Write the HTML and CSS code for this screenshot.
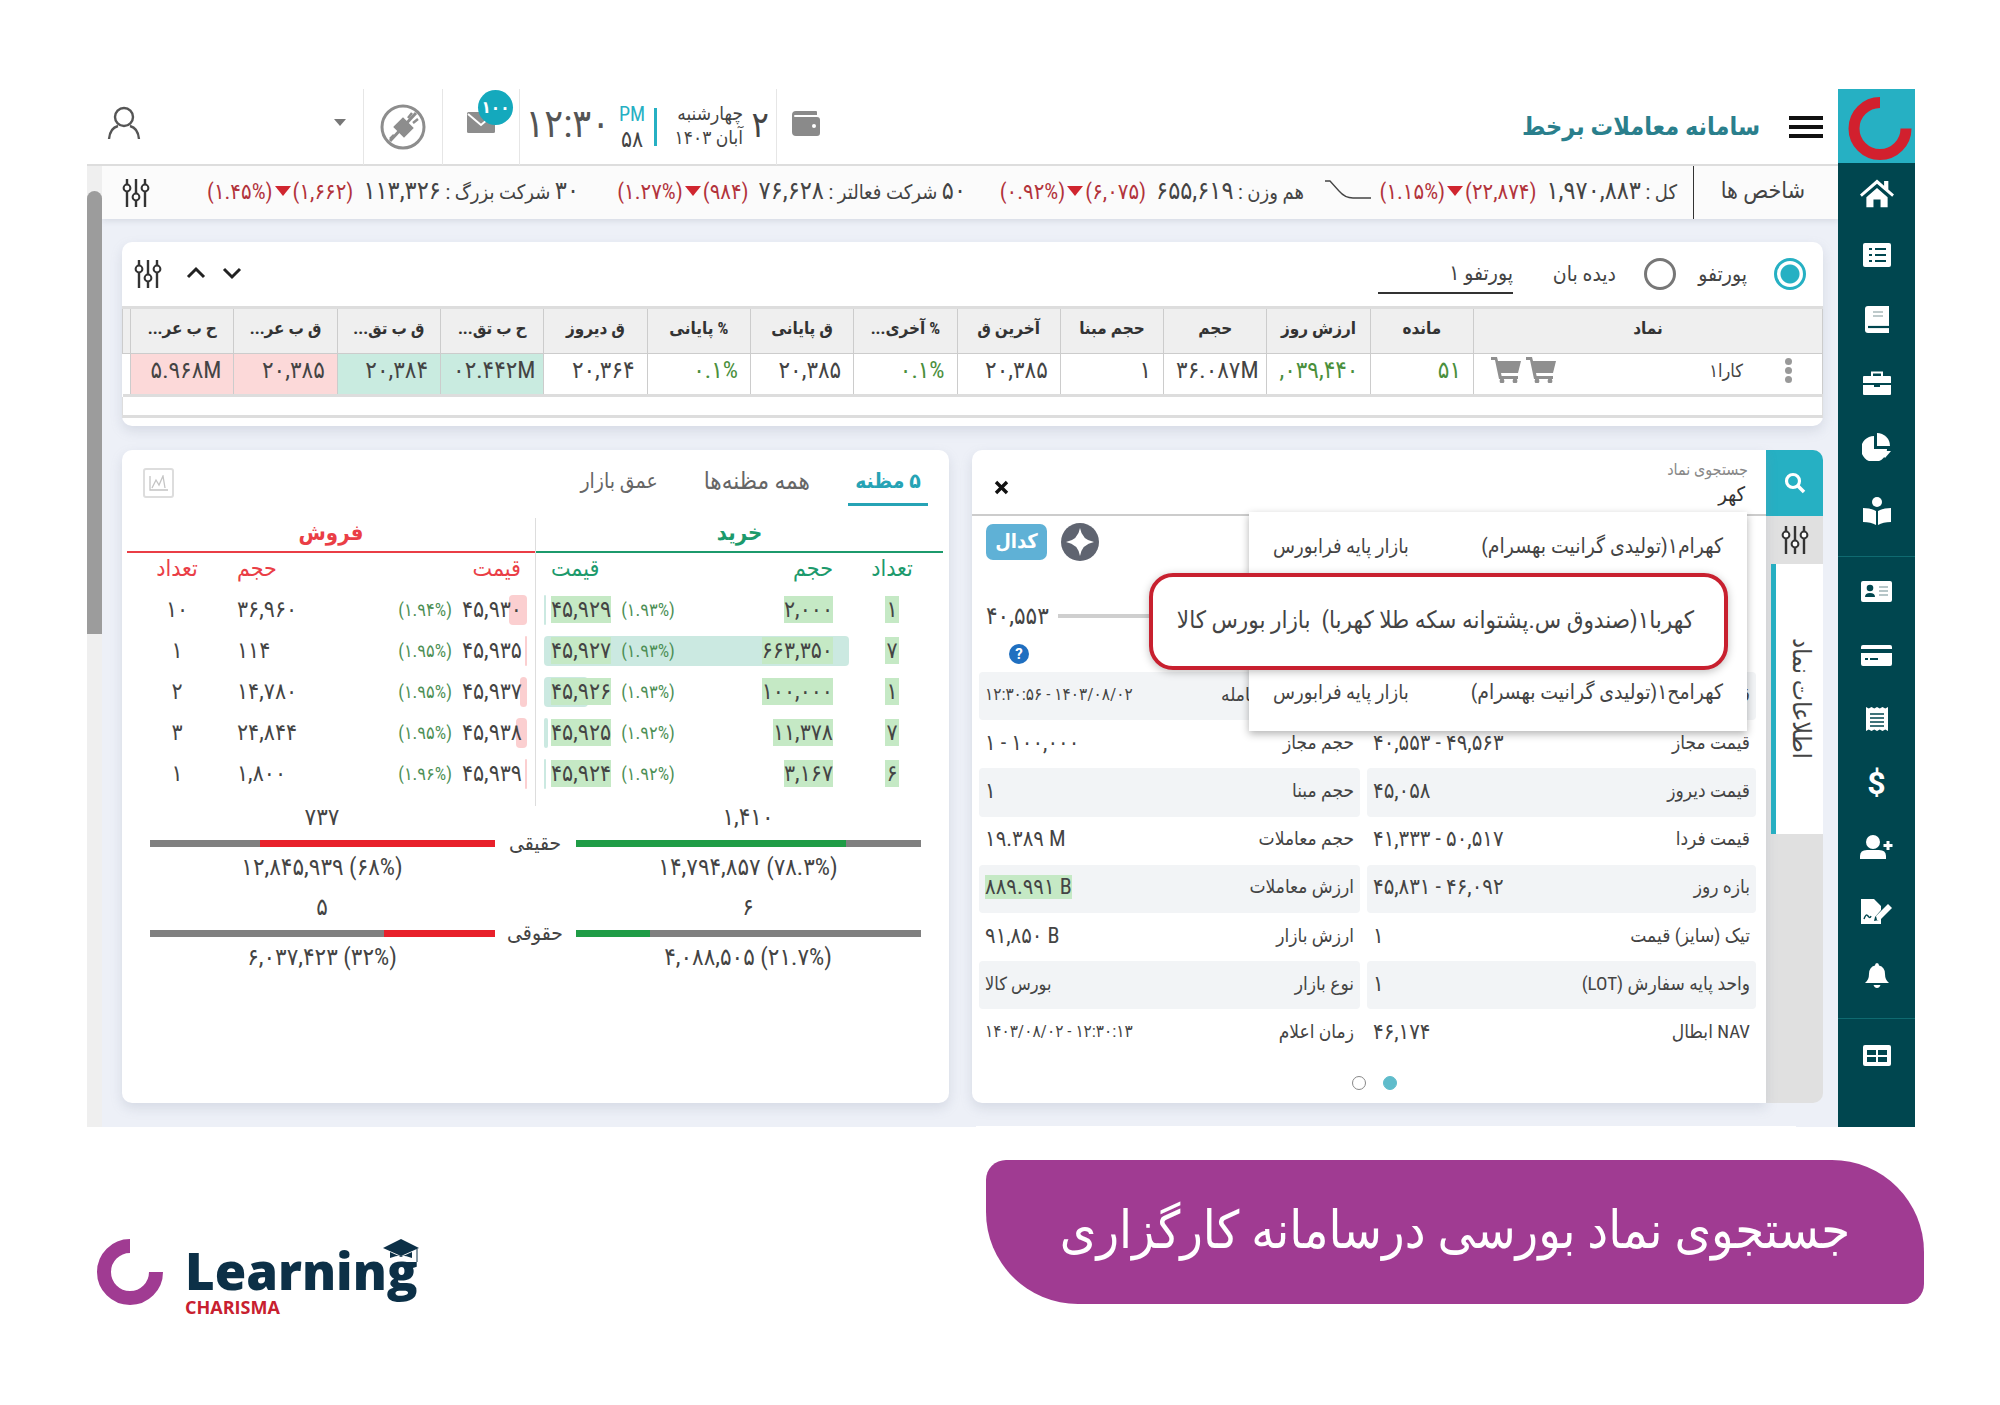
FILE: index.html
```html
<!DOCTYPE html>
<html lang="fa" dir="rtl">
<head>
    <meta charset="utf-8">
    <title>سامانه معاملات برخط</title>
    <link rel="stylesheet" href="styles.css">
</head>
<body>
    <svg class="defs" width="0" height="0">
        <symbol id="i-sliders" viewBox="0 0 30 30">
            <path d="M6 1v28M15 1v28M24 1v28" stroke="#333" stroke-width="2.4" fill="none"/>
            <circle cx="6" cy="10" r="3.4" fill="#fff" stroke="#333" stroke-width="2"/>
            <circle cx="15" cy="19" r="3.4" fill="#fff" stroke="#333" stroke-width="2"/>
            <circle cx="24" cy="10" r="3.4" fill="#fff" stroke="#333" stroke-width="2"/>
        </symbol>
        <symbol id="i-cart" viewBox="0 0 30 26">
            <path d="M0 0h6l1 4h23l-3 12H10l.6 3H27v3H8L4 3H0z" fill="#8f8f8f"/>
            <circle cx="11" cy="24" r="2.4" fill="#8f8f8f"/>
            <circle cx="24" cy="24" r="2.4" fill="#8f8f8f"/>
        </symbol>
    </svg>

    <div class="app">
        <aside class="side">
            <div class="side-logo">
                <svg width="77" height="74" viewBox="0 0 77 74"><path d="M42 13.5A26 26 0 1 0 68 39.5" fill="none" stroke="#d2202e" stroke-width="11"/></svg>
            </div>
            <div class="side-group">
                <span class="side-item"><svg width="34" height="30" viewBox="0 0 24 21"><path d="M12 1 0 11.5l1.3 1.6L12 3.9l10.7 9.2 1.3-1.6-4-3.5V2h-3v3.4z M4.500 13.500 12 7l7.500 6.500V20.500h-5v-5.500h-5v5.500h-5z" fill="#fff"/></svg></span>
                <span class="side-item"><svg width="28" height="24" viewBox="0 0 28 24"><rect width="28" height="24" rx="2" fill="#fff"/><path d="M6 6h3M12 6h11M6 12h3M12 12h11M6 18h3M12 18h11" stroke="#00464f" stroke-width="2.200"/></svg></span>
                <span class="side-item"><svg width="24" height="27" viewBox="0 0 24 27"><path d="M3 0h21v27H3a3 3 0 0 1-3-3V3a3 3 0 0 1 3-3z" fill="#fff"/><path d="M8 6h10M8 10h10" stroke="#a9b9bb" stroke-width="1.600"/><path d="M3 21h21" stroke="#00464f" stroke-width="2.200"/></svg></span>
                <span class="side-item"><svg width="28" height="24" viewBox="0 0 28 24"><path d="M9 5V1.500h10V5" fill="none" stroke="#fff" stroke-width="2"/><path d="M1 5h26a1 1 0 0 1 1 1v6H0V6a1 1 0 0 1 1-1zM0 14h11v2h6v-2h11v9a1 1 0 0 1-1 1H1a1 1 0 0 1-1-1z" fill="#fff"/></svg></span>
                <span class="side-item"><svg width="30" height="28" viewBox="0 0 30 28"><path d="M12 3v13h13A13 13 0 1 1 12 3z" fill="#fff"/><path d="M15 0a13 13 0 0 1 13 13H15z" fill="#fff"/><path d="M17 18h12l-6 7z" fill="#fff"/></svg></span>
                <span class="side-item"><svg width="28" height="28" viewBox="0 0 28 28"><circle cx="14" cy="5" r="5" fill="#fff"/><path d="M0 11q8 0 13 3v14q-5-3-13-3zM28 11q-8 0-13 3v14q5-3 13-3z" fill="#fff"/></svg></span>
            </div>
            <div class="side-group">
                <span class="side-item"><svg width="31" height="21" viewBox="0 0 31 21"><rect width="31" height="21" rx="2" fill="#fff"/><circle cx="9" cy="7" r="3.300" fill="#00464f"/><path d="M4 16q0-4 5-4t5 4z" fill="#00464f"/><path d="M18 6h9M18 10h9M18 14h9" stroke="#9fb4b7" stroke-width="1.600"/></svg></span>
                <span class="side-item"><svg width="31" height="21" viewBox="0 0 31 21"><path d="M2 0h27a2 2 0 0 1 2 2v2H0V2a2 2 0 0 1 2-2zM0 8h31v11a2 2 0 0 1-2 2H2a2 2 0 0 1-2-2z" fill="#fff"/><path d="M4 14h3M9 14h8" stroke="#00464f" stroke-width="2"/></svg></span>
                <span class="side-item"><svg width="22" height="24" viewBox="0 0 22 24"><path d="M0 0l2.750 1.500L5.500 0l2.750 1.500L11 0l2.750 1.500L16.500 0l2.750 1.500L22 0v24l-2.750-1.500L16.500 24l-2.750-1.500L11 24l-2.750-1.500L5.500 24l-2.750-1.500L0 24z" fill="#fff"/><path d="M4 7h14M4 11h14M4 15h14M4 19h14" stroke="#00464f" stroke-width="1.700"/></svg></span>
                <span class="side-item side-dollar">$</span>
                <span class="side-item"><svg width="34" height="24" viewBox="0 0 34 24"><circle cx="13" cy="7" r="7" fill="#fff"/><path d="M0 24v-3q0-6 7-6h12q7 0 7 6v3z" fill="#fff"/><path d="M28 6v9M23.500 10.500h9" stroke="#fff" stroke-width="3"/></svg></span>
                <span class="side-item"><svg width="31" height="25" viewBox="0 0 31 25"><path d="M0 0h13l7 7v4l-6 7-1 4 5-1 2-2v6H0z" fill="#fff"/><path d="M3 20q2-6 4-3t3 0" fill="none" stroke="#00464f" stroke-width="1.400"/><path d="M16 21l-1-4L27 5l4 4-12 12z" fill="#fff"/></svg></span>
                <span class="side-item"><svg width="24" height="25" viewBox="0 0 24 25"><path d="M12 0q2 0 2 2.500Q20 4 20 11q0 6 4 9H0q4-3 4-9 0-7 6-8.500Q10 0 12 0z" fill="#fff"/><path d="M8.500 22h7q-1 3-3.500 3T8.500 22z" fill="#fff"/></svg></span>
            </div>
            <div class="side-group side-last">
                <span class="side-item"><svg width="28" height="21" viewBox="0 0 28 21"><rect width="28" height="21" rx="2" fill="#fff"/><path d="M4 5h9v5H4zM15 5h9v5h-9zM4 12h9v5H4zM15 12h9v5h-9z" fill="#00464f"/></svg></span>
            </div>
        </aside>

        <div class="main">
            <header class="topbar">
                <span class="burger"><i></i><i></i><i></i></span>
                <h1 class="brand">سامانه معاملات برخط</h1>
                <span class="top-fill"></span>
                <span class="wallet"><svg width="28" height="25" viewBox="0 0 28 25"><path d="M4 0h20a1 1 0 0 1 1 1v3H3a1 1 0 0 0 0 2h22a3 3 0 0 1 3 3v13a3 3 0 0 1-3 3H4a4 4 0 0 1-4-4V4a4 4 0 0 1 4-4z" fill="#8a8a8a"/><circle cx="22" cy="15" r="2" fill="#fff"/></svg></span>
                <div class="top-cell clock-cell">
                    <span class="day">۲</span>
                    <span class="date"><b>چهارشنبه</b><b>آبان ۱۴۰۳</b></span>
                    <span class="vline"></span>
                    <span class="ampm"><em>PM</em><b>۵۸</b></span>
                    <span class="clock">۱۲:۳۰</span>
                </div>
                <div class="top-cell mail-cell">
                    <span class="badge">۱۰۰</span>
                    <svg width="28" height="21" viewBox="0 0 28 21"><rect width="28" height="21" rx="1.500" fill="#8d8d8d"/><path d="M1 2l13 11L27 2" fill="none" stroke="#fff" stroke-width="2"/></svg>
                </div>
                <div class="top-cell plug-cell">
                    <svg width="46" height="46" viewBox="0 0 46 46"><circle cx="23" cy="23" r="21" fill="none" stroke="#8d8d8d" stroke-width="3"/><path d="M10 37 36 9" stroke="#8d8d8d" stroke-width="3"/><path d="M15 23l8-8 9 9-8 8zM28 14l4-5M33 19l5-4M14 31l-4 4" fill="#8d8d8d" stroke="#8d8d8d" stroke-width="2.500"/></svg>
                </div>
                <div class="user-cell">
                    <span class="caret"></span>
                    <svg width="34" height="34" viewBox="0 0 34 34"><circle cx="17" cy="11" r="9" fill="none" stroke="#555" stroke-width="2.400"/><path d="M2 33q1-11 9-13M32 33q-1-11-9-13" fill="none" stroke="#555" stroke-width="2.400"/></svg>
                </div>
            </header>

            <div class="body">
                <div class="content">
                    <div class="ticker">
                        <span class="tick-head">شاخص ها</span>
                        <span class="tick tick-a">کل : <b>۱,۹۷۰,۸۸۳</b><i>(۱.۱۵%)<u></u>(۲۲,۸۷۴)</i></span>
                        <svg class="spark" width="46" height="22" viewBox="0 0 46 22"><path d="M0 2h5l9 10q6 7 14 7h18" fill="none" stroke="#444" stroke-width="1.300"/></svg>
                        <span class="tick tick-b">هم وزن : <b>۶۵۵,۶۱۹</b><i>(۰.۹۲%)<u></u>(۶,۰۷۵)</i></span>
                        <span class="tick tick-c"><b>۵۰</b> شرکت فعالتر : <b>۷۶,۶۲۸</b><i>(۱.۲۷%)<u></u>(۹۸۴)</i></span>
                        <span class="tick tick-d"><b>۳۰</b> شرکت بزرگ : <b>۱۱۳,۳۲۶</b><i>(۱.۴۵%)<u></u>(۱,۶۶۲)</i></span>
                        <svg class="tick-tune" width="30" height="30"><use href="#i-sliders"/></svg>
                    </div>

                    <section class="panel folio">
                        <div class="folio-bar">
                            <span class="radio on"></span>
                            <label class="radio-label">پورتفو</label>
                            <span class="radio"></span>
                            <label class="radio-label watch">دیده بان</label>
                            <span class="folio-input">پورتفو ۱</span>
                            <span class="bar-fill"></span>
                            <svg class="chev" width="20" height="14" viewBox="0 0 20 14"><path d="M2 3l8 8 8-8" fill="none" stroke="#222" stroke-width="3"/></svg>
                            <svg class="chev" width="20" height="14" viewBox="0 0 20 14"><path d="M2 11 10 3l8 8" fill="none" stroke="#222" stroke-width="3"/></svg>
                            <svg class="bar-tune" width="30" height="30"><use href="#i-sliders"/></svg>
                        </div>
                        <table class="grid">
                            <thead>
                                <tr>
                                    <th>نماد</th><th>مانده</th><th>ارزش روز</th><th>حجم</th><th>حجم مبنا</th><th>آخرین ق</th><th>% آخری...</th><th>ق پایانی</th><th>% پایانی</th><th>ق دیروز</th><th>ح ب تق...</th><th>ق ب تق...</th><th>ق ب عر...</th><th>ح ب عر...</th><th class="tail"></th>
                                </tr>
                            </thead>
                            <tbody>
                                <tr>
                                    <td class="sym">
                                        <span class="kebab"><i></i><i></i><i></i></span>
                                        <span class="sym-name">کارا۱</span>
                                        <span class="carts">
                                            <svg width="30" height="26"><use href="#i-cart"/></svg>
                                            <svg width="30" height="26"><use href="#i-cart"/></svg>
                                        </span>
                                    </td>
                                    <td class="up">۵۱</td>
                                    <td class="up">,۰۳۹,۴۴۰</td>
                                    <td>۳۶.۰۸۷M</td>
                                    <td>۱</td>
                                    <td>۲۰,۳۸۵</td>
                                    <td class="up">۰.۱%</td>
                                    <td>۲۰,۳۸۵</td>
                                    <td class="up">۰.۱%</td>
                                    <td>۲۰,۳۶۴</td>
                                    <td class="bg-buy">۰۲.۴۴۲M</td>
                                    <td class="bg-buy">۲۰,۳۸۴</td>
                                    <td class="bg-sell">۲۰,۳۸۵</td>
                                    <td class="bg-sell">۵.۹۶۸M</td>
                                    <td class="tail"></td>
                                </tr>
                            </tbody>
                        </table>
                        <div class="folio-foot"></div>
                    </section>

                    <div class="lower">
                        <div class="symbol-wrap">
                            <section class="panel symbol">
                                <div class="search">
                                    <div class="search-field">
                                        <small>جستجوی نماد</small>
                                        <span>کهر</span>
                                    </div>
                                    <svg class="search-x" width="15" height="15" viewBox="0 0 15 15"><path d="M2 2l11 11M13 2 2 13" stroke="#111" stroke-width="3.400"/></svg>
                                </div>
                                <div class="sym-top">
                                    <div class="sym-icons">
                                        <span class="codal">کدال</span>
                                        <svg width="40" height="40" viewBox="0 0 40 40"><circle cx="20" cy="20" r="19" fill="#5f6470"/><path d="M20 6q2 12 14 14-12 2-14 14-2-12-14-14 12-2 14-14z" fill="#fff"/></svg>
                                    </div>
                                    <div class="range"><span class="range-lo">۴۰,۵۵۳</span><span class="range-line"></span></div>
                                    <span class="help">?</span>
                                </div>
                                <div class="info">
                                    <div class="cell shade"><span>قیمت پایانی</span><b>۴۵,۹۳۰</b></div>
                                    <div class="cell shade"><span>زمان آخرین معامله</span><b class="stamp">۱۲:۳۰:۵۶ - ۱۴۰۳/۰۸/۰۲</b></div>
                                    <div class="cell"><span>قیمت مجاز</span><b>۴۰,۵۵۳ - ۴۹,۵۶۳</b></div>
                                    <div class="cell"><span>حجم مجاز</span><b>۱ - ۱۰۰,۰۰۰</b></div>
                                    <div class="cell shade"><span>قیمت دیروز</span><b>۴۵,۰۵۸</b></div>
                                    <div class="cell shade"><span>حجم مبنا</span><b>۱</b></div>
                                    <div class="cell"><span>قیمت فردا</span><b>۴۱,۳۳۳ - ۵۰,۵۱۷</b></div>
                                    <div class="cell"><span>حجم معاملات</span><b>۱۹.۳۸۹ M</b></div>
                                    <div class="cell shade"><span>بازه روز</span><b>۴۵,۸۳۱ - ۴۶,۰۹۲</b></div>
                                    <div class="cell shade"><span>ارزش معاملات</span><b class="hi">۸۸۹.۹۹۱ B</b></div>
                                    <div class="cell"><span>تیک (سایز) قیمت</span><b>۱</b></div>
                                    <div class="cell"><span>ارزش بازار</span><b>۹۱,۸۵۰ B</b></div>
                                    <div class="cell shade"><span>واحد پایه سفارش (LOT)</span><b>۱</b></div>
                                    <div class="cell shade"><span>نوع بازار</span><b class="word">بورس کالا</b></div>
                                    <div class="cell"><span>NAV ابطال</span><b>۴۶,۱۷۴</b></div>
                                    <div class="cell"><span>زمان اعلام</span><b class="stamp">۱۴۰۳/۰۸/۰۲ - ۱۲:۳۰:۱۳</b></div>
                                </div>
                                <div class="dots"><i class="on"></i><i></i></div>

                                <ul class="suggest">
                                    <li><span>کهرام۱(تولیدی گرانیت بهسرام)</span><span>بازار پایه فرابورس</span></li>
                                    <li></li>
                                    <li><span>کهرامح۱(تولیدی گرانیت بهسرام)</span><span>بازار پایه فرابورس</span></li>
                                </ul>
                                <div class="callout">کهربا۱(صندوق س.پشتوانه سکه طلا کهربا) &nbsp;بازار بورس کالا</div>
                            </section>
                            <div class="rail">
                                <span class="rail-search"><svg width="22" height="22" viewBox="0 0 22 22"><circle cx="9" cy="9" r="6.500" fill="none" stroke="#fff" stroke-width="3.200"/><path d="M14 14l6 6" stroke="#fff" stroke-width="3.600"/></svg></span>
                                <span class="rail-tune"><svg width="30" height="30"><use href="#i-sliders"/></svg></span>
                                <span class="rail-tab"><span>اطلاعات نماد</span></span>
                            </div>
                        </div>

                        <section class="panel book">
                            <div class="tabs">
                                <span class="tab on">۵ مظنه</span>
                                <span class="tab all">همه مظنه‌ها</span>
                                <span class="tab">عمق بازار</span>
                                <span class="tabs-fill"></span>
                                <span class="chart-btn"><svg width="20" height="16" viewBox="0 0 20 16"><path d="M1 1v14h18M3 13l4-8 3 5 4-9 2 12" fill="none" stroke="#c4c4c4" stroke-width="1.300"/></svg></span>
                            </div>
                            <div class="sides">
                                <div class="side-buy">
                                    <h3>خرید</h3>
                                    <div class="b-row b-head"><span>تعداد</span><span>حجم</span><span>قیمت</span></div>
                                    <div class="b-row"><i class="depth" style="width:2px"></i><span class="q"><b>۱</b></span><span class="v"><b>۲,۰۰۰</b></span><span class="p"><b>۴۵,۹۲۹</b><em>(۱.۹۳%)</em></span></div>
                                    <div class="b-row"><i class="depth" style="width:305px"></i><span class="q"><b>۷</b></span><span class="v"><b>۶۶۳,۳۵۰</b></span><span class="p"><b>۴۵,۹۲۷</b><em>(۱.۹۳%)</em></span></div>
                                    <div class="b-row"><i class="depth" style="width:44px"></i><span class="q"><b>۱</b></span><span class="v"><b>۱۰۰,۰۰۰</b></span><span class="p"><b>۴۵,۹۲۶</b><em>(۱.۹۳%)</em></span></div>
                                    <div class="b-row"><i class="depth" style="width:4px"></i><span class="q"><b>۷</b></span><span class="v"><b>۱۱,۳۷۸</b></span><span class="p"><b>۴۵,۹۲۵</b><em>(۱.۹۲%)</em></span></div>
                                    <div class="b-row"><i class="depth" style="width:2px"></i><span class="q"><b>۶</b></span><span class="v"><b>۳,۱۶۷</b></span><span class="p"><b>۴۵,۹۲۴</b><em>(۱.۹۲%)</em></span></div>
                                </div>
                                <div class="side-sell">
                                    <h3>فروش</h3>
                                    <div class="s-row s-head"><span>تعداد</span><span>حجم</span><span>قیمت</span></div>
                                    <div class="s-row"><i class="depth" style="width:18px"></i><span class="q">۱۰</span><span class="v">۳۶,۹۶۰</span><span class="p"><em>(۱.۹۴%)</em><b>۴۵,۹۳۰</b></span></div>
                                    <div class="s-row"><i class="depth" style="width:2px"></i><span class="q">۱</span><span class="v">۱۱۴</span><span class="p"><em>(۱.۹۵%)</em><b>۴۵,۹۳۵</b></span></div>
                                    <div class="s-row"><i class="depth" style="width:7px"></i><span class="q">۲</span><span class="v">۱۴,۷۸۰</span><span class="p"><em>(۱.۹۵%)</em><b>۴۵,۹۳۷</b></span></div>
                                    <div class="s-row"><i class="depth" style="width:11px"></i><span class="q">۳</span><span class="v">۲۴,۸۴۴</span><span class="p"><em>(۱.۹۵%)</em><b>۴۵,۹۳۸</b></span></div>
                                    <div class="s-row"><i class="depth" style="width:2px"></i><span class="q">۱</span><span class="v">۱,۸۰۰</span><span class="p"><em>(۱.۹۶%)</em><b>۴۵,۹۳۹</b></span></div>
                                </div>
                            </div>
                            <div class="split">
                                <span class="count">۱,۴۱۰</span><span></span><span class="count">۷۳۷</span>
                                <span class="track buy"><i style="width:78.3%"></i></span><span class="split-name">حقیقی</span><span class="track sell"><i style="width:68%"></i></span>
                                <span>۱۴,۷۹۴,۸۵۷ (۷۸.۳%)</span><span></span><span>۱۲,۸۴۵,۹۳۹ (۶۸%)</span>
                            </div>
                            <div class="split">
                                <span class="count">۶</span><span></span><span class="count">۵</span>
                                <span class="track buy"><i style="width:21.7%"></i></span><span class="split-name">حقوقی</span><span class="track sell"><i style="width:32%"></i></span>
                                <span>۴,۰۸۸,۵۰۵ (۲۱.۷%)</span><span></span><span>۶,۰۳۷,۴۲۳ (۳۲%)</span>
                            </div>
                        </section>
                    </div>
                    <div class="next-panel"></div>
                </div>
                <div class="scroll"><span class="thumb"></span></div>
            </div>
        </div>
    </div>

    <footer class="foot">
        <div class="banner">جستجوی نماد بورسی درسامانه کارگزاری</div>
        <div class="brand-mark">
            <svg width="66" height="66" viewBox="0 0 66 66"><path d="M33 7A26 26 0 1 0 59 33" fill="none" stroke="#a03b92" stroke-width="14"/></svg>
            <div class="brand-text">
                <span class="learning">Learning<svg class="hat" width="38" height="32" viewBox="0 0 38 32"><path d="M19 0 37 9 19 17 1 9z" fill="#0c3047"/><path d="M8 13v6q11-5 22 0v-6l-11 5z" fill="#0c3047"/><path d="M35 10v13" stroke="#0c3047"/></svg></span>
                <span class="charisma">CHARISMA</span>
            </div>
        </div>
    </footer>
</body>
</html>
```

FILE: styles.css
```css
* { box-sizing: border-box; }
html, body { margin: 0; padding: 0; }
body {
    background: #fff;
    width: 2000px;
    height: 1405px;
    overflow: hidden;
    padding: 89px 85px 0 0;
    font-family: Roboto, "DejaVu Sans Condensed", "DejaVu Sans", sans-serif;
    font-stretch: condensed;
    color: #444;
    font-size: 18px;
}
.defs { position: absolute; }
i, em, u { font-style: normal; text-decoration: none; }

.app { display: flex; width: 1828px; height: 1038px; overflow: hidden; }

/* sidebar */
.side { width: 77px; background: #00464f; display: flex; flex-direction: column; flex: none; }
.side-logo { height: 74px; background: #26b0c3; }
.side-logo svg { display: block; }
.side-group { border-bottom: 1px solid #0f6a70; }
.side-group:nth-child(2) { height: 394px; }
.side-group:nth-child(3) { height: 462px; padding-top: 2px; }
.side-last { border-bottom: 0; }
.side-item { display: flex; align-items: center; justify-content: center; height: 64px; color: #fff; }
.side-group:nth-child(2) .side-item:first-child { height: 60px; }
.side-last .side-item { height: 72px; }
.side-dollar { font: bold 32px Roboto, sans-serif; }

/* header */
.main { flex: 1; display: flex; flex-direction: column; min-width: 0; }
.topbar { height: 77px; flex: none; display: flex; align-items: center; background: #fff; border-bottom: 2px solid #ddd; }
.burger { width: 34px; margin-right: 15px; display: flex; flex-direction: column; gap: 5px; }
.burger i { display: block; height: 4px; background: #111; }
.brand { margin: 0 29px 0 0; font-size: 25px; color: #2a7f8c; font-weight: bold; white-space: nowrap; }
.top-fill { flex: 1; }
.wallet { margin: 0 0 6px 15px; display: flex; }
.top-cell { height: 76px; border-right: 1px solid #e6e6e6; display: flex; align-items: center; position: relative; flex: none; }
.clock-cell { width: 257px; }
.day { font-size: 36px; margin: 0 7px 4px 0; width: 26px; }
.date { display: flex; flex-direction: column; font-size: 19px; line-height: 24px; width: 86px; white-space: nowrap; padding-bottom: 2px; }
.date b, .ampm b { font-weight: normal; }
.vline { width: 3px; height: 38px; background: #26b0c3; }
.ampm { display: flex; flex-direction: column; align-items: center; width: 44px; line-height: 25px; font-size: 23px; }
.ampm em { color: #26b0c3; font-size: 20px; }
.clock { font-size: 39px; direction: ltr; color: #555; padding-bottom: 6px; }
.mail-cell { width: 77px; padding: 0 24px 8px 0; }
.badge { position: absolute; right: 6px; top: 1px; width: 35px; height: 35px; border-radius: 50%; background: #14a9bd; color: #fff; font-size: 17px; font-weight: bold; text-align: center; line-height: 35px; }
.plug-cell { width: 79px; justify-content: center; }
.user-cell { width: 277px; flex: none; height: 76px; border-right: 1px solid #e6e6e6; display: flex; align-items: center; justify-content: space-between; padding: 0 17px 8px 20px; }
.caret { width: 0; height: 0; border: 6px solid transparent; border-top: 7px solid #777; border-bottom: 0; }

/* body area */
.body { flex: 1; display: flex; min-height: 0; }
.content { flex: 1; background: #edf0f7; display: flex; flex-direction: column; min-width: 0; overflow: hidden; }
.scroll { width: 15px; background: #efefef; flex: none; padding-top: 25px; }
.thumb { display: block; height: 443px; background: #9c9c9c; border-radius: 8px 8px 0 0; }

/* ticker */
.ticker { height: 53px; flex: none; display: flex; align-items: center; background: #fbfbfb; font-size: 20px; white-space: nowrap; box-shadow: 0 2px 6px rgba(120,130,150,.2); }
.tick-head { width: 145px; flex: none; border-left: 1px solid #333; height: 100%; display: flex; align-items: center; padding: 0 33px 5px 0; font-size: 23px; }
.tick { flex: none; padding-bottom: 5px; }
.tick b { font-weight: normal; font-size: 25px; }
.tick i { display: inline-flex; align-items: center; direction: ltr; color: #b2333b; font-size: 22px; margin-right: 10px; }
.tick u { display: block; width: 0; height: 0; border: 8px solid transparent; border-top: 10px solid #d0252f; border-bottom: 0; margin: 0 2px; }
.tick-a { margin-right: 16px; width: 306px; }
.spark { flex: none; margin: 0 0 5px 21px; }
.tick-b { width: 315px; margin-left: 23px; }
.tick-c { width: 364px; margin-left: 23px; }
.tick-d { width: 370px; }
.tick-tune { margin-right: 58px; flex: none; }

/* panels */
.panel { background: #fff; border-radius: 10px; box-shadow: 0 5px 12px rgba(130,140,165,.22); }
.folio { margin: 23px 15px 0 20px; height: 184px; flex: none; }
.folio-bar { height: 64px; display: flex; align-items: center; padding-right: 17px; font-size: 21px; }
.radio { width: 32px; height: 32px; border-radius: 50%; border: 3px solid #777; flex: none; }
.radio.on { border-color: #26b0c3; background: radial-gradient(circle, #26b0c3 9px, #fff 10px); }
.radio-label { margin: 0 27px 0 21px; width: 50px; white-space: nowrap; }
.radio-label.watch { margin: 0 28px 0 35px; width: 68px; }
.folio-input { width: 135px; height: 40px; border-bottom: 2px solid #333; display: flex; align-items: center; }
.bar-fill { flex: 1; }
.chev { margin: 0 0 3px 16px; }
.chev + .chev { margin-left: 23px; }
.bar-tune { margin-left: 11px; }

.grid { width: 100%; border-collapse: collapse; table-layout: fixed; border-bottom: 3px solid #ddd; }
.grid th { height: 46px; background: #efefef; border: 1px solid #ccc; border-top: 3px solid #ddd; font-size: 17px; color: #333; overflow: hidden; white-space: nowrap; padding: 0 4px 7px; }
.grid th:first-child { width: 349px; }
.grid th.tail { width: 8px; padding: 0; }
.grid td { height: 42px; border: 1px solid #ccc; border-top: 0; direction: ltr; text-align: right; padding: 0 12px 9px; font-size: 24px; overflow: hidden; white-space: nowrap; color: #444; }
.grid td.tail { padding: 0; border: 0; }
.grid td.up { color: #4a8f3c; }
.grid td.bg-buy { background: #c9ebe0; }
.grid td.bg-sell { background: #fcd9d9; }
.grid td.sym { direction: rtl; padding: 0 0 8px; font-size: 18px; }
.kebab { display: inline-flex; flex-direction: column; gap: 2px; margin-right: 30px; vertical-align: middle; }
.kebab i { width: 7px; height: 7px; border-radius: 50%; background: #999; display: block; }
.sym-name { display: inline-block; margin-right: 38px; width: 183px; vertical-align: middle; }
.carts { display: inline-flex; gap: 5px; vertical-align: middle; }
.folio-foot { height: 21px; border: 1px solid #ddd; border-top: 0; border-bottom-width: 3px; }

/* lower row */
.lower { display: flex; gap: 23px; margin: 24px 15px 0 20px; height: 653px; flex: none; }
.next-panel { height: 8px; width: 820px; margin: 23px 42px 0 auto; background: #fff; flex: none; }

.symbol-wrap { width: 851px; display: flex; flex: none; }
.rail { width: 57px; order: -1; display: flex; flex-direction: column; background: #e0e0e0; border-radius: 0 10px 10px 0; flex: none; overflow: hidden; }
.rail-search { height: 66px; background: #26b0c3; display: flex; align-items: center; justify-content: center; }
.rail-tune { height: 48px; display: flex; align-items: center; justify-content: center; }
.rail-tab { height: 270px; width: 52px; background: #fff; border-left: 5px solid #26b0c3; display: flex; align-items: center; justify-content: center; padding: 0 0 2px 3px; }
.rail-tab span { writing-mode: vertical-rl; font-size: 25px; white-space: nowrap; }

.symbol { width: 794px; flex: none; position: relative; border-radius: 10px 0 0 10px; }
.search { height: 66px; border-bottom: 2px solid #ccc; padding: 10px 18px 0 0; position: relative; }
.search-field { display: flex; flex-direction: column; line-height: 20px; }
.search-field small { font-size: 16px; color: #888; }
.search-field span { font-size: 20px; color: #333; margin-top: 4px; padding-right: 3px; }
.search-x { position: absolute; left: 22px; top: 30px; }
.sym-top { height: 156px; padding: 6px 0 0 14px; direction: ltr; }
.sym-icons { display: flex; gap: 13px; }
.codal { width: 61px; height: 36px; border-radius: 7px; background: #5fb1d6; color: #fff; font-weight: bold; font-size: 20px; text-align: center; line-height: 34px; margin-top: 2px; }
.range { display: flex; align-items: center; gap: 9px; margin-top: 40px; }
.range-lo { font-size: 24px; }
.range-line { width: 600px; height: 4px; background: #cfcfcf; }
.help { display: block; width: 20px; height: 20px; margin: 14px 0 0 23px; border-radius: 50%; background: #1f6fc0; color: #fff; font: bold 15px/20px Roboto, sans-serif; text-align: center; }

.info { display: grid; grid-template-columns: 389px 381px; column-gap: 7px; padding: 0 10px 0 7px; }
.cell { height: 48.2px; display: flex; align-items: center; justify-content: space-between; padding: 0 6px 4px; font-size: 19px; white-space: nowrap; border-radius: 4px; }
.cell.shade { background: #f2f4f6; }
.cell b { font-weight: normal; direction: ltr; font-size: 22px; }
.cell b.stamp { font-size: 17px; }
.cell b.word { font-size: 18px; direction: rtl; }
.cell b.hi { background: #c5e9c5; line-height: 24px; }
.dots { display: flex; justify-content: center; gap: 17px; margin-top: 18px; padding-left: 10px; }
.dots i { width: 14px; height: 14px; border-radius: 50%; border: 1px solid #888; }
.dots i.on { background: #5fbccb; border-color: #5fbccb; }

.suggest { position: absolute; left: 277px; top: 62px; width: 498px; height: 219px; margin: 0; padding: 0; list-style: none; background: #fff; box-shadow: 0 3px 8px rgba(0,0,0,.3); font-size: 20px; }
.suggest li { height: 73px; display: flex; align-items: center; justify-content: space-between; padding: 0 24px 5px; white-space: nowrap; }
.suggest li span:first-child { font-size: 21px; }
.callout { position: absolute; left: 177px; top: 123px; width: 579px; height: 97px; background: #fff; border: 4px solid #c8202f; border-radius: 24px; box-shadow: 0 2px 8px rgba(0,0,0,.25); display: flex; align-items: center; padding: 0 30px 4px 0; font-size: 24px; white-space: nowrap; }

/* order book */
.book { width: 827px; flex: none; padding: 0 6px 0 5px; }
.tabs { height: 56px; display: flex; align-items: flex-end; padding-right: 15px; color: #666; font-size: 21px; }
.tab { padding-bottom: 13px; margin-left: 46px; white-space: nowrap; }
.tab.all { font-size: 24px; padding-bottom: 11px; }
.tab.on { color: #26a3b5; font-weight: bold; border-bottom: 3px solid #26a3b5; width: 80px; text-align: center; padding-bottom: 10px; margin-left: 38px; }
.tabs-fill { flex: 1; }
.chart-btn { width: 31px; height: 30px; border: 2px solid #ddd; border-radius: 3px; display: flex; align-items: center; justify-content: center; margin: 0 0 8px 16px; }
.sides { display: flex; height: 288px; margin-top: 12px; }
.side-buy, .side-sell { width: 408px; flex: none; }
.side-buy { border-left: 1px solid #ddd; }
h3 { margin: 0; height: 35px; text-align: center; font-size: 22px; line-height: 30px; }
.side-buy h3 { color: #1c9a6c; border-bottom: 2px solid #1c9a6c; }
.side-sell h3 { color: #ea3e46; border-bottom: 2px solid #ea3e46; }
.b-row { display: grid; grid-template-columns: 102px 162px 144px; height: 41px; align-items: center; position: relative; font-size: 23px; }
.b-row.b-head { height: 36px; color: #1c9a6c; font-size: 23px; padding-bottom: 6px; }
.b-head span:nth-child(2) { padding-right: 8px; }
.b-head span:nth-child(3) { text-align: left; padding-left: 16px; }
.b-head span:first-child, .s-head span:first-child { text-align: center; }
.b-row .q { text-align: center; }
.b-row .q b { display: inline-block; background: #c5e9c5; padding: 0 1px; font-weight: normal; line-height: 27px; }
.b-row .v { padding-right: 8px; position: relative; }
.b-row .v b { display: inline-block; background: #c5e9c5; font-weight: normal; line-height: 27px; }
.b-row .p { display: flex; direction: ltr; padding-left: 16px; align-items: center; gap: 10px; position: relative; }
.b-row .p b { background: #c5e9c5; font-weight: normal; line-height: 27px; }
.b-row em, .s-row em { color: #4d8f55; font-size: 18px; }
.b-row .depth { position: absolute; left: 8px; top: 6px; height: 30px; background: rgba(38,165,130,.24); border-radius: 4px; }
.s-row { display: grid; direction: ltr; grid-template-columns: 100px 1fr 170px; height: 41px; align-items: center; position: relative; font-size: 23px; }
.s-row.s-head { height: 36px; color: #ea3e46; font-size: 23px; padding-bottom: 6px; }
.s-head span:nth-child(2) { padding-left: 10px; }
.s-head span:nth-child(3) { text-align: right; padding-right: 14px; }
.s-row .q { text-align: center; }
.s-row .v { padding-left: 10px; }
.s-row .p { display: flex; justify-content: flex-end; gap: 10px; padding-right: 13px; align-items: center; position: relative; }
.s-row .p b { font-weight: normal; }
.s-row .depth { position: absolute; right: 8px; top: 6px; height: 30px; background: #fbcfd0; border-radius: 4px; }
.split { display: grid; grid-template-columns: 345px 81px 345px; justify-content: center; align-items: center; text-align: center; grid-auto-rows: 24px; margin: 1px 0 18px; font-size: 24px; }
.split span { direction: ltr; white-space: nowrap; }
.split .count { padding-bottom: 5px; }
.split .split-name { direction: rtl; font-size: 21px; }
.track { display: block; height: 7px; background: #808080; position: relative; }
.track i { position: absolute; top: 0; bottom: 0; }
.track.buy i { left: 0; background: #1f9c46; }
.track.sell i { right: 0; background: #e8202a; }

/* footer */
.foot { display: flex; justify-content: space-between; margin: 33px -85px 0 0; width: 2000px; padding: 0 76px 0 97px; }
.banner { width: 938px; height: 144px; background: #a03b92; color: #fff; border-radius: 20px 92px 20px 92px; display: flex; align-items: center; justify-content: center; padding-bottom: 4px; font-size: 52px; white-space: nowrap; }
.brand-mark { display: flex; direction: ltr; gap: 22px; margin-top: 79px; }
.brand-text { display: flex; flex-direction: column; padding-top: 11px; }
.learning { position: relative; font: 800 51px/52px "Open Sans", sans-serif; color: #0c3047; margin-top: -6px; }
.hat { position: absolute; right: -2px; top: -5px; }
.charisma { font: bold 18px/22px "Open Sans", sans-serif; color: #c8202f; }
```
